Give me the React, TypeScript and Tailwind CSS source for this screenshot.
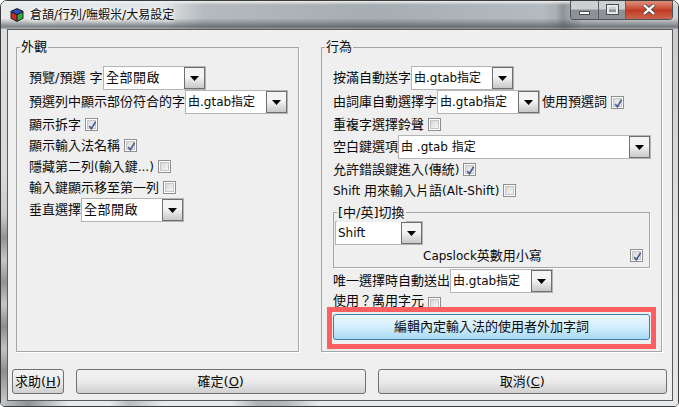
import React from "react";

const L = ({ children }: { children: React.ReactNode }) => <span className="text-[12px]">{children}</span>;

function Check({ on = false }: { on?: boolean }) {
  return (
    <span className="ml-[4px] w-[13px] h-[13px] shrink-0 border border-[#8f8f8f] bg-[#fff] p-[1px] inline-flex">
      <span className="w-full h-full bg-gradient-to-br from-[#d8d8d8] to-[#f6f6f6] border border-[#c4c4c4] relative">
        {on && (
          <svg viewBox="0 0 9 9" className="absolute inset-0 w-[9px] h-[9px]">
            <path d="M1.2 5 L3.4 7.8 L7.6 0.8" fill="none" stroke="#4a5f97" strokeWidth="1.7" />
          </svg>
        )}
      </span>
    </span>
  );
}

function Combo({ w, children, wide = false }: { w: string; children: React.ReactNode; wide?: boolean }) {
  return (
    <div className={`${w} h-[24px] shrink-0 flex border border-[#b4b4b4] bg-white`}>
      <div className={`flex-1 min-w-0 pl-[2px] leading-[22px] whitespace-nowrap overflow-hidden ${wide ? "text-[13px] tracking-[0.5px]" : "text-[12px]"}`}>{children}</div>
      <div className="w-[21px] shrink-0 border border-[#6f6f6f] bg-gradient-to-b from-[#f4f4f4] from-[45%] to-[#c8c8c8] flex items-center justify-center">
        <svg viewBox="0 0 9 5" className="w-[9px] h-[5px]">
          <path d="M0 0 H9 L4.5 5 Z" fill="#000" />
        </svg>
      </div>
    </div>
  );
}

function Row({ children, h = "h-[21px]" }: { children: React.ReactNode; h?: string }) {
  return <div className={`${h} flex items-center whitespace-nowrap`}>{children}</div>;
}

function Group({ title, w, children }: { title: string; w: string; children: React.ReactNode }) {
  return (
    <div className={`${w} h-[305px] relative border border-[#a6a6a6] shadow-[1px_1px_0_#fff] pt-[18px]`}>
      <span className="absolute left-[3px] -top-[10px] h-[18px] px-[1px] bg-[#efefef] text-[13px] leading-[18px]">{title}</span>
      {children}
    </div>
  );
}

function Btn({ className, children }: { className: string; children: React.ReactNode }) {
  return (
    <button className={`${className} h-[25px] rounded-[3px] border border-[#707070] bg-gradient-to-b from-[#f3f3f3] from-0% via-[#ebebeb] via-50% to-[#cfcfcf] text-[13px] leading-[23px] text-center whitespace-nowrap`}>
      {children}
    </button>
  );
}

export default function App() {
  return (
    <div className="w-[679px] h-[407px] bg-white text-[#0a0a0a] font-['DejaVu_Sans','Noto_Sans_CJK_TC',sans-serif]">
      <div className="w-full h-full rounded-t-[7px] rounded-b-[5px] border border-[#3c3c3c] flex flex-col overflow-hidden">
        {/* title bar */}
        <div className="h-[28px] shrink-0 flex items-start bg-[linear-gradient(180deg,#eef0f1_0%,transparent_14%,transparent_62%,rgba(70,76,82,0.65)_92%,rgba(120,125,130,0.5)_100%),linear-gradient(90deg,#e8ebec_0%,#dfe2e4_24%,#b4babe_30%,#a6adb2_55%,#b3bbc1_80%,#a9afb3_82%,#8d9296_83%,#c6cacc_86%,#d0d3d5_100%)]">
          <svg viewBox="0 0 16 16" className="w-[16px] h-[16px] ml-[8px] mt-[6px] shrink-0">
            <path d="M8 1 L14.5 4 V11.5 L8 15 L1.5 11.5 V4 Z" fill="#222" />
            <path d="M8 2.2 L13.2 4.6 L8 7 L2.8 4.6 Z" fill="#2a4fc8" />
            <path d="M2.5 5.6 L7.4 8 V13.6 L2.5 11 Z" fill="#d12a2a" />
            <path d="M8.6 8 L13.5 5.6 V11 L8.6 13.6 Z" fill="#2fae3a" />
          </svg>
          <span className="ml-[5px] mt-[5px] text-[12px] leading-[18px] [text-shadow:0_0_6px_#fff,0_0_6px_#fff]">倉頡/行列/嘸蝦米/大易設定</span>
          <div className="ml-auto mr-[5px] flex h-[20px] -mt-[1px] border border-t-0 border-[#4c5258] rounded-b-[4px] overflow-hidden">
            <div className="w-[28px] border-r border-[#5a6066] bg-gradient-to-b from-[#cdd0d3] from-[48%] to-[#8e9296] to-[52%] flex items-center justify-center">
              <span className="w-[11px] h-[4px] mt-[6px] bg-white border border-[#4a4f55]" />
            </div>
            <div className="w-[27px] border-r border-[#5a6066] bg-gradient-to-b from-[#cdd0d3] from-[48%] to-[#8e9296] to-[52%] flex items-center justify-center">
              <span className="w-[11px] h-[9px] border-[2px] border-[#e8e8e8] outline outline-1 outline-[#4a4f55]" />
            </div>
            <div className="w-[46px] bg-gradient-to-b from-[#dc8a76] from-[10%] via-[#c33a22] via-[55%] to-[#c9654e] flex items-center justify-center">
              <svg viewBox="0 0 12 10" className="w-[14px] h-[11px]">
                <path d="M1.5 1 L10.5 9 M10.5 1 L1.5 9" stroke="#3a3f45" strokeWidth="3.6" />
                <path d="M1.5 1 L10.5 9 M10.5 1 L1.5 9" stroke="#fff" strokeWidth="2.2" />
              </svg>
            </div>
          </div>
        </div>

        <div className="flex flex-1">
          {/* left frame */}
          <div className="w-[6px] shrink-0 bg-[linear-gradient(180deg,#dcdfe1_0%,#d6d9db_40%,#c8cbcd_50%,#8f9396_56%,#c4c7c9_62%,#8f9396_68%,#c4c7c9_74%,#8a8e91_80%,#bfc3c5_86%,#8a8e91_92%,#c4c7c9_100%)]" />

          {/* client area */}
          <div className="w-[666px] h-[372px] shrink-0 border border-[#5a5a5a] bg-[#efefef] flex flex-col pt-[17px] pl-[8px]">
            <div className="flex gap-[22px]">
              <Group title="外觀" w="w-[283px]">
                <div className="pl-[12px]">
                  <Row h="h-[24px]">
                    <span className="w-[74px] shrink-0 text-[13px]">預覽/預選 字</span>
                    <Combo w="w-[103px]" wide>全部開啟</Combo>
                  </Row>
                  <Row h="h-[24px]">
                    <span className="w-[156px] shrink-0 text-[13px]">預選列中顯示部份符合的字</span>
                    <Combo w="w-[103px]">由.gtab指定</Combo>
                  </Row>
                  <Row><span className="text-[13px]">顯示拆字</span><Check on /></Row>
                  <Row><span className="text-[13px]">顯示輸入法名稱</span><Check on /></Row>
                  <Row><span className="text-[13px]">隱藏第二列<L>(</L>輸入鍵<L>...)</L></span><Check /></Row>
                  <Row><span className="text-[13px]">輸入鍵顯示移至第一列</span><Check /></Row>
                  <Row h="h-[24px]">
                    <span className="w-[52px] shrink-0 text-[13px]">垂直選擇</span>
                    <Combo w="w-[103px]" wide>全部開啟</Combo>
                  </Row>
                </div>
              </Group>

              <Group title="行為" w="w-[341px]">
                <div className="pl-[11px]">
                  <Row h="h-[24px]">
                    <span className="w-[78px] shrink-0 text-[13px]">按滿自動送字</span>
                    <Combo w="w-[103px]">由.gtab指定</Combo>
                  </Row>
                  <Row h="h-[24px]">
                    <span className="w-[104px] shrink-0 text-[13px]">由詞庫自動選擇字</span>
                    <Combo w="w-[103px]">由.gtab指定</Combo>
                    <span className="ml-[2px] text-[13px]">使用預選詞</span>
                    <Check on />
                  </Row>
                  <Row><span className="text-[13px]">重複字選擇鈴聲</span><Check /></Row>
                  <Row h="h-[24px]">
                    <span className="w-[65px] shrink-0 text-[13px]">空白鍵選項</span>
                    <Combo w="w-[253px]">由 .gtab 指定</Combo>
                  </Row>
                  <Row><span className="text-[13px]">允許錯誤鍵進入<L>(</L>傳統<L>)</L></span><Check on /></Row>
                  <Row><span className="text-[13px]"><L>Shift </L>用來輸入片語<L>(Alt-Shift)</L></span><Check /></Row>

                  <div className="relative mt-[11px] w-[317px] h-[56px] border border-[#a6a6a6] shadow-[1px_1px_0_#fff] pt-[8px] pl-[1px]">
                    <span className="absolute left-[3px] -top-[9px] h-[18px] px-[1px] bg-[#efefef] text-[13px] leading-[18px]">[中/英]切換</span>
                    <Combo w="w-[88px]"><L>Shift</L></Combo>
                    <div className="h-[21px] flex items-center pl-[88px] text-[13px]">
                      <L>Capslock</L>英數用小寫
                      <span className="ml-auto mr-[6px] flex"><Check on /></span>
                    </div>
                  </div>

                  <div className="mt-[1px]">
                    <Row h="h-[24px]">
                      <span className="w-[117px] shrink-0 text-[13px]">唯一選擇時自動送出</span>
                      <Combo w="w-[103px]">由.gtab指定</Combo>
                    </Row>
                  </div>
                  <Row h="h-[21px]"><span className="text-[13px] leading-[16px] -mt-[5px]">使用？萬用字元</span><Check /></Row>

                  <div className="relative w-[317px]">
                    <button className="w-full h-[26px] rounded-[3px] border border-[#3c7fb1] bg-gradient-to-b from-[#eaf6fd] from-0% via-[#d7effc] via-45% to-[#a7d9f5] text-[13px] leading-[24px] text-center">
                      編輯內定輸入法的使用者外加字詞
                    </button>
                    <span className="absolute -left-[6px] -right-[6px] -top-[7px] -bottom-[9px] border-[5px] border-[#fb5f60] pointer-events-none" />
                  </div>
                </div>
              </Group>
            </div>

            <div className="mt-[17px] -ml-[4px] w-[655px] flex gap-[12px]">
              <Btn className="w-[52px] shrink-0">求助(<u>H</u>)</Btn>
              <Btn className="flex-1">確定(<u>O</u>)</Btn>
              <Btn className="flex-1">取消(<u>C</u>)</Btn>
            </div>
          </div>

          {/* right frame */}
          <div className="flex-1 bg-[linear-gradient(180deg,#c8cccf_0%,#dfe2e4_60%,#e4e7e9_100%)]" />
        </div>

        {/* bottom frame */}
        <div className="h-[5px] shrink-0 bg-[linear-gradient(90deg,#c4c7c9_0%,#8f9396_4%,#e4eaee_10%,#e4eaee_16%,#b8bcbf_19%,#e4eaee_24%,#e4eaee_34%,#aeb2b5_38%,#b4b8bb_42%,#e4eaee_47%,#e4eaee_100%)]" />
      </div>
    </div>
  );
}
